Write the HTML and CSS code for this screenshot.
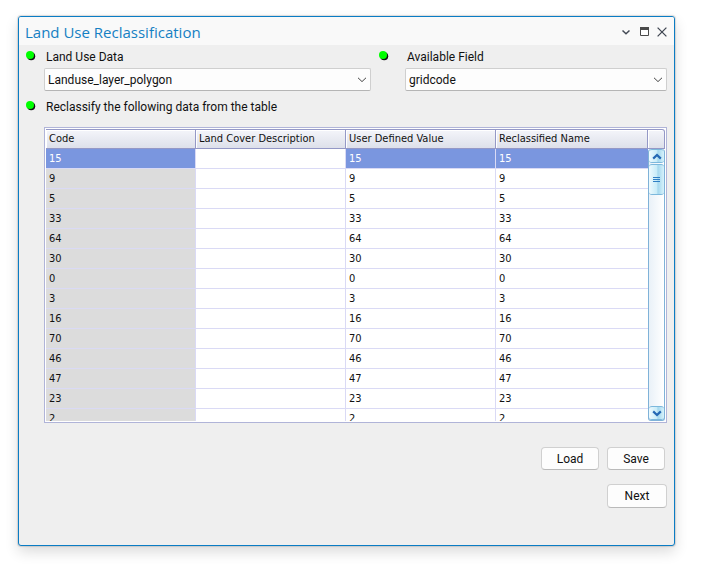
FILE: index.html
```html
<!DOCTYPE html>
<html lang="en">

<head>
    <meta charset="UTF-8">
    <meta name="viewport" content="width=device-width, initial-scale=1.0">
    <title>Land Use Reclassification</title>
    <link rel="stylesheet" href="styles.css">
</head>

<body>
    <div class="window">
        <div class="titlebar">
            <h1>Land Use Reclassification</h1>
            <div class="window-controls">
                <button type="button" aria-label="Options">
                    <svg width="10" height="10" viewBox="0 0 10 10"><path d="M1.5 3.5L5 6.7L8.5 3.5" fill="none" stroke="#444a55" stroke-width="1.5"/></svg>
                </button>
                <button type="button" aria-label="Maximize">
                    <svg width="10" height="10" viewBox="0 0 10 10"><path d="M1.5 .5h8v8h-8z" fill="#fff" stroke="#4a4a4a"/><path d="M1 0h9v3H1z" fill="#4a4a4a"/></svg>
                </button>
                <button type="button" aria-label="Close">
                    <svg width="10" height="10" viewBox="0 0 10 10"><path d="M.6 .6L9.4 9.4M9.4 .6L.6 9.4" stroke="#444a55" stroke-width="1.3"/></svg>
                </button>
            </div>
        </div>

        <form class="content">
            <div class="fields">
                <div class="field">
                    <svg class="dot" width="10" height="10" viewBox="0 0 10 10"><circle cx="5.2" cy="5.2" r="4" fill="#111"/><circle cx="4" cy="4" r="4" fill="#0f0"/></svg>
                    <label for="layer">Land Use Data</label>
                    <div class="select-box">
                        <select id="layer">
                            <option>Landuse_layer_polygon</option>
                        </select>
                        <svg class="arrow" width="10" height="6" viewBox="0 0 10 6"><path d="M1 .8L5 4.6L9 .8" fill="none" stroke="#444"/></svg>
                    </div>
                </div>
                <div class="field">
                    <svg class="dot" width="10" height="10" viewBox="0 0 10 10"><circle cx="5.2" cy="5.2" r="4" fill="#111"/><circle cx="4" cy="4" r="4" fill="#0f0"/></svg>
                    <label for="gridfield">Available Field</label>
                    <div class="select-box">
                        <select id="gridfield">
                            <option>gridcode</option>
                        </select>
                        <svg class="arrow" width="10" height="6" viewBox="0 0 10 6"><path d="M1 .8L5 4.6L9 .8" fill="none" stroke="#444"/></svg>
                    </div>
                </div>
            </div>

            <div class="field">
                <svg class="dot" width="10" height="10" viewBox="0 0 10 10"><circle cx="5.2" cy="5.2" r="4" fill="#111"/><circle cx="4" cy="4" r="4" fill="#0f0"/></svg>
                <p class="caption" id="tableCaption">Reclassify the following data from the table</p>
            </div>

            <div class="grid">
                <div class="rows">
                    <table aria-labelledby="tableCaption">
                        <colgroup>
                            <col class="col-fixed">
                            <col class="col-fixed">
                            <col class="col-fixed">
                            <col>
                        </colgroup>
                        <thead>
                            <tr><th>Code</th><th>Land Cover Description</th><th>User Defined Value</th><th>Reclassified Name</th></tr>
                        </thead>
                        <tbody>
                            <tr class="selected"><td>15</td><td></td><td>15</td><td>15</td></tr>
                            <tr><td>9</td><td></td><td>9</td><td>9</td></tr>
                            <tr><td>5</td><td></td><td>5</td><td>5</td></tr>
                            <tr><td>33</td><td></td><td>33</td><td>33</td></tr>
                            <tr><td>64</td><td></td><td>64</td><td>64</td></tr>
                            <tr><td>30</td><td></td><td>30</td><td>30</td></tr>
                            <tr><td>0</td><td></td><td>0</td><td>0</td></tr>
                            <tr><td>3</td><td></td><td>3</td><td>3</td></tr>
                            <tr><td>16</td><td></td><td>16</td><td>16</td></tr>
                            <tr><td>70</td><td></td><td>70</td><td>70</td></tr>
                            <tr><td>46</td><td></td><td>46</td><td>46</td></tr>
                            <tr><td>47</td><td></td><td>47</td><td>47</td></tr>
                            <tr><td>23</td><td></td><td>23</td><td>23</td></tr>
                            <tr><td>2</td><td></td><td>2</td><td>2</td></tr>
                        </tbody>
                    </table>
                </div>
                <div class="side">
                    <div class="corner"></div>
                    <div class="scrollbar">
                        <button type="button" class="scroll-btn" aria-label="Scroll up">
                            <svg width="10" height="7" viewBox="0 0 10 7"><path d="M1.2 5.6L5 2L8.8 5.6" fill="none" stroke="#2468b4" stroke-width="2.2"/></svg>
                        </button>
                        <div class="thumb">
                            <svg width="7" height="6" viewBox="0 0 7 6"><path d="M0 .5h7M0 2.5h7M0 4.5h7" stroke="#2f7fc4"/></svg>
                        </div>
                        <button type="button" class="scroll-btn scroll-down" aria-label="Scroll down">
                            <svg width="10" height="7" viewBox="0 0 10 7"><path d="M1.2 1.4L5 5L8.8 1.4" fill="none" stroke="#2468b4" stroke-width="2.2"/></svg>
                        </button>
                    </div>
                </div>
            </div>

            <div class="buttons">
                <button type="button" class="btn">Load</button>
                <button type="button" class="btn btn-save">Save</button>
                <button type="submit" class="btn btn-next">Next</button>
            </div>
        </form>
    </div>
</body>

</html>
```
FILE: styles.css
```css
* {
    box-sizing: border-box;
}

body {
    margin: 0;
    padding: 16px 45px 38px 18px;
    background-color: #fff;
    font-family: Roboto, "Noto Sans", sans-serif;
    font-size: 12px;
    line-height: 16px;
    color: #111;
}

button,
select {
    font: inherit;
    color: inherit;
}

.window {
    border: 1px solid #0a7cc4;
    border-radius: 3px;
    background-color: #efefef;
    box-shadow: 0 6px 14px rgba(0, 0, 0, 0.14), 0 0 1px 1px rgba(0, 0, 0, 0.12);
    overflow: hidden;
}

/* title bar */
.titlebar {
    display: flex;
    align-items: center;
    justify-content: space-between;
    height: 28px;
    padding: 2px 7px 0 6px;
    background-color: #f9f9f9;
}

h1 {
    margin: 0;
    font-family: "Open Sans", "Noto Sans", sans-serif;
    font-size: 15px;
    font-weight: 400;
    line-height: 20px;
    color: #1580c3;
}

.window-controls {
    display: flex;
    gap: 8px;
}

.window-controls button {
    display: flex;
    padding: 0;
    border: none;
    background: none;
}

/* fields */
.content {
    padding: 4px 7px 37px 7px;
}

.fields {
    display: grid;
    grid-template-columns: 345fr 288fr;
    gap: 8px;
    margin-bottom: 8px;
}

.field {
    display: grid;
    grid-template-columns: 18px 1fr;
    row-gap: 3px;
}

.field label,
.caption {
    margin: 0;
    padding-left: 2px;
}

.fields .field + .field {
    grid-template-columns: 26px 1fr;
}

.dot {
    margin-top: 2px;
}

.select-box {
    grid-column: 2;
    position: relative;
}

.select-box select {
    display: block;
    width: 100%;
    height: 23px;
    padding: 0 24px 0 3px;
    border: 1px solid #cfcfcf;
    border-bottom-color: #b5b5b5;
    border-radius: 2px;
    background-color: #fdfdfd;
    appearance: none;
}

.arrow {
    position: absolute;
    right: 4px;
    top: 9px;
    pointer-events: none;
}

/* table */
.grid {
    display: flex;
    height: 296px;
    margin: 12px 0 24px 18px;
    padding: 1px;
    border: 1px solid #b0b4d8;
    background-color: #fff;
    font-family: "DejaVu Sans Condensed", "DejaVu Sans", sans-serif;
    font-size: 11px;
}

.rows {
    flex: 1;
    overflow: hidden;
}

table {
    width: 100%;
    table-layout: fixed;
    border-collapse: separate;
    border-spacing: 0;
}

.col-fixed {
    width: 150px;
}

th,
.corner {
    height: 20px;
    border: 1px solid #9498c6;
    border-left: none;
    background: linear-gradient(#f4f5fa, #dde0ea);
    box-shadow: inset 1px 1px #fff;
}

th {
    padding: 0 3px;
    font-weight: 400;
    text-align: left;
    white-space: nowrap;
}

td {
    height: 20px;
    padding: 0 3px;
    border-right: 1px solid #dadaf5;
    border-bottom: 1px solid #dadaf5;
    line-height: 18px;
}

td:last-child {
    border-right: none;
}

td:first-child {
    background-color: #dcdcdc;
}

.selected td:not(:empty) {
    background-color: #7a96df;
    color: #fff;
}

.side {
    display: flex;
    flex-direction: column;
    width: 17px;
}

.corner {
    border-top-right-radius: 3px;
}

.scrollbar {
    display: flex;
    flex: 1;
    flex-direction: column;
    gap: 1px;
    border: 1px solid #7fb2d8;
    border-top: none;
    border-radius: 3px;
    background: linear-gradient(90deg, #e9f1f8, #fff);
}

.scroll-btn,
.thumb {
    display: flex;
    align-items: center;
    justify-content: center;
    height: 14px;
    padding: 0;
    border: 1px solid #7cb8dc;
    border-width: 1px 0;
    border-radius: 3px;
    background: linear-gradient(90deg, #eefafe, #c9ecf8 50%, #a5d8ee 60%, #d7f2fb);
}

.thumb {
    height: 31px;
}

.scroll-down {
    margin-top: auto;
}

/* buttons */
.buttons {
    display: grid;
    grid-template-columns: 58px 60px;
    justify-content: end;
    gap: 14px 8px;
}

.btn {
    height: 23px;
    padding: 0;
    border: 1px solid #d0d0d0;
    border-bottom-color: #bababa;
    border-radius: 4px;
    background-color: #fdfdfd;
}

.btn-save {
    width: 58px;
}

.btn-next {
    grid-column: 2;
    height: 24px;
}
```
